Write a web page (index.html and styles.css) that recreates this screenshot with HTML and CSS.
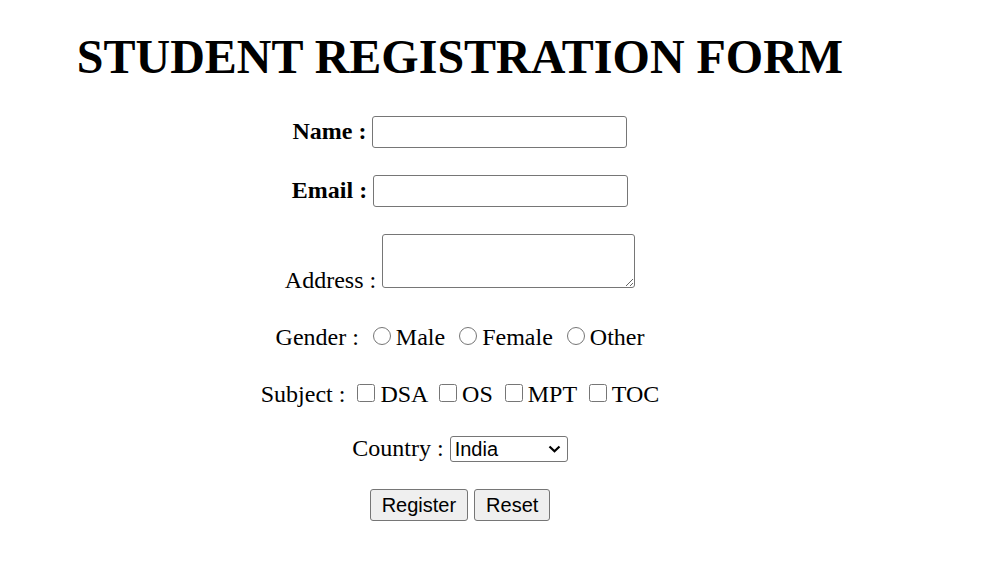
FILE: index.html
```html
<!DOCTYPE html>
<html>
<head>
<meta charset="utf-8">
<title>Student Registration Form</title>
<link rel="stylesheet" href="styles.css">
</head>
<body>
<div class="page">
  <h1 class="title">STUDENT REGISTRATION FORM</h1>
  <form class="form">
    <div class="row row-name"><b class="lbl">Name :</b> <input class="text-input" type="text"></div>
    <div class="row row-email"><b class="lbl">Email :</b> <input class="text-input" type="email"></div>
    <div class="row row-address">Address : <textarea class="area"></textarea></div>
    <div class="row row-gender">Gender : <input class="radio" type="radio" name="g">Male <input class="radio" type="radio" name="g">Female <input class="radio" type="radio" name="g">Other</div>
    <div class="row row-subject">Subject : <input class="check" type="checkbox">DSA <input class="check" type="checkbox">OS <input class="check" type="checkbox">MPT <input class="check" type="checkbox">TOC</div>
    <div class="row row-country">Country : <span class="sel-wrap"><select class="sel"><option>India</option><option>USA</option><option>UK</option></select><svg class="chev" width="13" height="8" viewBox="0 0 13 8"><path d="M1.5 1.5 L6.5 6.3 L11.5 1.5" fill="none" stroke="#000" stroke-width="2.2"/></svg></span></div>
    <div class="row row-buttons"><button class="btn" type="button">Register</button> <button class="btn" type="reset">Reset</button></div>
  </form>
</div>
</body>
</html>
```
FILE: styles.css
```css
html, body {
  margin: 0;
  padding: 0;
  background: #ffffff;
}
body {
  font-family: "Liberation Serif", "Times New Roman", serif;
  font-size: 24px;
  color: #000000;
}
.page {
  width: 896px;
  padding: 1px 0 0 12px;
}
.title {
  font-size: 48px;
  font-weight: bold;
  line-height: 55px;
  margin: 28px 0 0 0;
  text-align: center;
}
.form {
  margin: 0;
}
.row {
  text-align: center;
}
.row-name { margin-top: 32px; }
.row-email { margin-top: 27px; }
.row-address { margin-top: 27px; }
.row-gender { margin-top: 29px; }
.row-subject { margin-top: 29px; }
.row-country { margin-top: 27px; }
.row-buttons { margin-top: 27px; }
.text-input {
  box-sizing: border-box;
  width: 255px;
  height: 32px;
  border: 1px solid #767676;
  border-radius: 3px;
  padding: 1px 3px;
  font-family: "Liberation Sans", Arial, sans-serif;
  font-size: 20px;
  margin: 0;
  background: #fff;
}
.area {
  box-sizing: border-box;
  width: 253px;
  height: 54px;
  border: 1px solid #767676;
  border-radius: 3px;
  padding: 3px;
  font-family: "Liberation Mono", monospace;
  font-size: 20px;
  margin: 0;
  vertical-align: baseline;
}
.radio {
  width: 18px;
  height: 18px;
  margin: 4px 5px 0 8px;
}
.check {
  width: 18px;
  height: 18px;
  margin: 4px 5px 4px 6px;
}
.sel-wrap {
  position: relative;
  display: inline-block;
}
.sel {
  box-sizing: border-box;
  width: 118px;
  height: 26px;
  padding: 0 0 0 4px;
  font-family: "Liberation Sans", Arial, sans-serif;
  font-size: 20px;
  border: 1px solid #767676;
  border-radius: 3px;
  background: #fff;
  color: #000;
  margin: 0;
  -webkit-appearance: none;
  appearance: none;
}
.chev {
  position: absolute;
  right: 7px;
  top: 10px;
  pointer-events: none;
}
.btn {
  box-sizing: border-box;
  height: 32px;
  padding: 1px 11px;
  font-family: "Liberation Sans", Arial, sans-serif;
  font-size: 20px;
  border: 1px solid #767676;
  border-radius: 3px;
  background: #efefef;
  color: #000;
  margin: 0;
}
```
